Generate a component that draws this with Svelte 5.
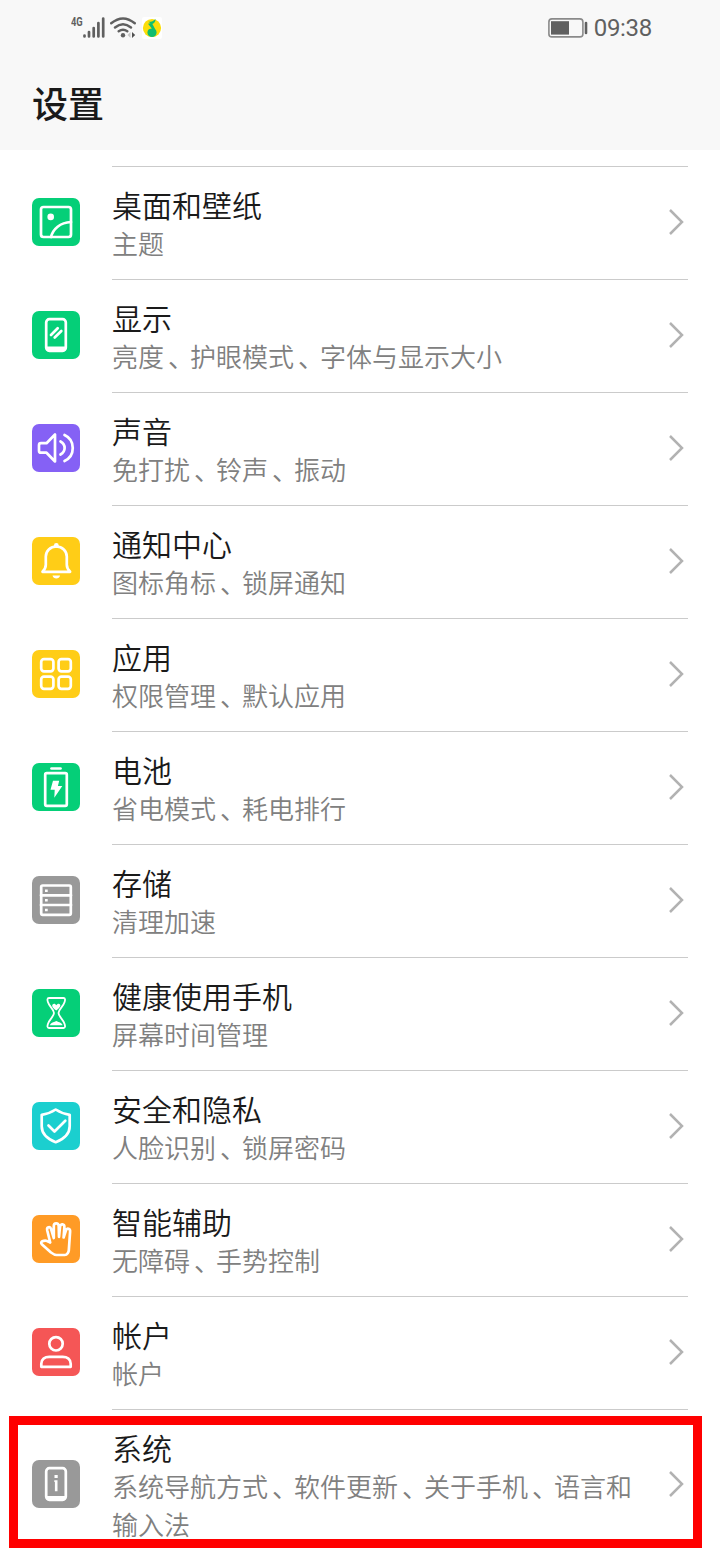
<script lang="ts">
  type Item = {
    icon: string
    color: string
    title: string
    summary: string
  }

  const items: Item[] = [
    { icon: 'wallpaper', color: 'green', title: '桌面和壁纸', summary: '主题' },
    { icon: 'display', color: 'green', title: '显示', summary: '亮度、护眼模式、字体与显示大小' },
    { icon: 'sound', color: 'purple', title: '声音', summary: '免打扰、铃声、振动' },
    { icon: 'bell', color: 'yellow', title: '通知中心', summary: '图标角标、锁屏通知' },
    { icon: 'apps', color: 'yellow', title: '应用', summary: '权限管理、默认应用' },
    { icon: 'battery', color: 'green', title: '电池', summary: '省电模式、耗电排行' },
    { icon: 'storage', color: 'gray', title: '存储', summary: '清理加速' },
    { icon: 'hourglass', color: 'green', title: '健康使用手机', summary: '屏幕时间管理' },
    { icon: 'shield', color: 'cyan', title: '安全和隐私', summary: '人脸识别、锁屏密码' },
    { icon: 'hand', color: 'orange', title: '智能辅助', summary: '无障碍、手势控制' },
    { icon: 'account', color: 'red', title: '帐户', summary: '帐户' },
    { icon: 'system', color: 'gray', title: '系统', summary: '系统导航方式、软件更新、关于手机、语言和输入法' },
  ]
</script>

<div class="screen">
  <header>
    <div class="status-bar">
      <div class="status-group">
        <span class="network">4G</span>
        <svg class="signal" width="22" height="21" viewBox="0 0 22 21">
          <path d="M1.5 18.5v1M6 15v4.5M10.7 11v8.5M15.4 6v13.5M20.2 1.5v18" stroke="#606060" stroke-width="2.7" stroke-linecap="round" />
        </svg>
        <svg class="wifi" width="26" height="22" viewBox="0 0 26 22" fill="none">
          <path d="M1.2 6.3Q13-3.4 24.8 6.3M5 10.5q8-6.7 16 0M8.7 14.3q4.3-3.3 8.6 0" stroke="#606060" stroke-width="2.4" stroke-linecap="round" />
          <circle cx="13" cy="18.3" r="2.2" fill="#606060" />
          <path d="M20.5 15v6l-3-3z" fill="#c8c8c8" />
          <path d="M22 15v6l3.2-3z" fill="#505050" />
        </svg>
        <svg class="music" width="20" height="22" viewBox="0 0 20 22">
          <rect width="20" height="22" rx="2" fill="#fff" />
          <circle cx="10" cy="11" r="9.1" fill="#fbdd09" />
          <path d="M6.5 4.8c2.500.2 5-.8 7-2.900.1 2.600-1.200 4.300-3.100 5l2.700 5.200a4.600 4.600 0 1 1-6.300.1l3-.7-3.800-4.700 2.500-.6z" fill="#10bd70" />
        </svg>
      </div>
      <div class="status-group">
        <svg width="40" height="20" viewBox="0 0 40 20" fill="none">
          <rect x=".9" y=".9" width="34" height="18" rx="3" stroke="#8a8a8a" stroke-width="1.6" />
          <rect x="3" y="3.2" width="18" height="13.4" fill="#606060" />
          <path d="M38 5v10" stroke="#606060" stroke-width="2.6" stroke-linecap="round" />
        </svg>
        <span class="time">09:38</span>
      </div>
    </div>
    <h1>设置</h1>
  </header>

  <main>
    {#each items as item, i}
      <div class="row" class:highlighted={i === items.length - 1}>
        <div class="tile {item.color}">
          <svg width="48" height="48" viewBox="0 0 48 48">
            {#if item.icon === 'wallpaper'}
              <rect x="9" y="9" width="30" height="30" rx="2.5" />
              <circle class="solid" cx="18.7" cy="18.9" r="3.3" />
              <path d="M19 39c2-8 9-14.500 20-15" />
            {:else if item.icon === 'display'}
              <rect x="14.2" y="8.2" width="19.6" height="31.6" rx="3.2" />
              <path class="solid" d="M14 35.500h20v3l-2 2H16l-2-2z" />
              <path d="m19 24 6.700-6.700M22.700 26.500l6.600-6.500" />
            {:else if item.icon === 'sound'}
              <path d="M23 10.500v27L14.500 28.700H9c-1.200 0-2-.8-2-2v-5.500c0-1.200.8-2 2-2h5.500zM28.500 17.500c5.500 3 5.500 10 0 13M32.500 11c11 5 11 21 0 26" />
            {:else if item.icon === 'bell'}
              <path d="M10.500 34.800c2.300-2.300 3.300-3.800 3.300-7V19.500c0-5.500 4.500-10 10.500-10s10.500 4.500 10.500 10v8.300c0 3.200 1 4.700 3.300 7z" />
              <circle class="solid" cx="24.3" cy="8.5" r="2.4" />
              <path class="solid" d="M20.500 38.500h7.600c-.7 4-6.900 4-7.600 0z" />
            {:else if item.icon === 'apps'}
              <rect x="9.2" y="9.2" width="12.2" height="12.2" rx="2.8" />
              <rect x="26.6" y="9.2" width="12.2" height="12.2" rx="2.8" />
              <rect x="9.2" y="26.6" width="12.2" height="12.2" rx="2.8" />
              <rect x="26.6" y="26.6" width="12.2" height="12.2" rx="2.8" />
            {:else if item.icon === 'battery'}
              <rect x="13.2" y="10.2" width="21.6" height="32.6" rx="1.5" />
              <path d="M19.500 5.500h9" />
              <path class="solid" d="m21 17.800h6.200l-1.300 5.200h4.400l-8 11.700.4-8h-4.200z" />
            {:else if item.icon === 'storage'}
              <rect x="9.2" y="9.5" width="29.6" height="29.3" rx="1.5" />
              <path d="M9 19.300h30M9 29h30" />
              <path class="solid" d="M13 13.400h2.700v2.500H13zM13 23.100h2.700v2.500H13zM13 32.700h2.700v2.500H13z" />
            {:else if item.icon === 'hourglass'}
              <path class="thin" d="M17 9h14.500c2 0 1.700 2 1.100 4-1.500 5-6.100 7.500-6.100 11s4.600 6 6.100 11c.6 2 .9 4-1.100 4H17c-2 0-1.700-2-1.100-4C17.400 30 22 27.500 22 24s-4.600-6-6.100-11c-.6-2-.9-4 1.100-4z" />
              <path class="solid" d="M24.300 21.500c-2.500-1.700-5.100-4-3.700-6 1.200-1.500 3-.5 3.700.8.700-1.300 2.700-2.300 3.700-.8 1.200 2-1.200 4.300-3.700 6zM18 36.300c.3-2.200 3.300-3 6.300-4.300 3 1.300 6 2.100 6.300 4.300z" />
            {:else if item.icon === 'shield'}
              <path d="M23.700 7.500c4.500 3 8.800 4.500 14 5.300v11.500c0 7-4.500 12.200-14 15.900-9.500-3.700-14-8.900-14-15.900V12.800c5.200-.8 9.500-2.300 14-5.300z" />
              <path d="m16.500 23.500 6 6 10.800-10.700" />
            {:else if item.icon === 'hand'}
              <path d="m18.200 27.500-3-12.300c-.7-3.200 2.900-4.200 3.900-1.200l2.700 9V11c0-3.500 4.700-3.500 4.900 0l.3 10.800 1-10c.3-3.400 4.600-3 4.400.4l-.8 10.300 2.300-7c1-3 4.500-2 4.200 1.200l-1.300 18.600c-.1 1.500-1.500 4.700-4 4.700H24.500c-2 0-3.700-1.200-5.500-2.500L9.800 29.200c-1-1.200-.7-2.300.5-2.900 2.300-1.200 4.700-.8 6.500.5z" />
            {:else if item.icon === 'account'}
              <circle cx="24" cy="15.8" r="6.7" />
              <path d="M9.300 38.800v-3c0-4.500 3.500-7 8-7h13.400c4.500 0 8 2.500 8 7v3z" />
            {:else if item.icon === 'system'}
              <rect x="14.2" y="8.2" width="19.6" height="31.6" rx="3.2" />
              <path class="solid" d="M14 36h20v2.500l-2 2H16l-2-2z" />
              <path class="solid" d="M22.500 15h3.200v3h-3.200zM22.300 20.200h3.200v11h-2.600v-9.200h-.6z" />
            {/if}
          </svg>
        </div>
        <div class="content">
          <div class="text">
            <div class="title">{item.title}</div>
            <div class="summary">
              {#each item.summary.split('、') as part, n}{#if n > 0}<span class="comma">、</span>{/if}{part}{/each}
            </div>
          </div>
          <svg class="chevron" width="18" height="28" viewBox="0 0 18 28">
            <path d="m2 2 12 12L2 26" fill="none" stroke="#b2b2b2" stroke-width="2.5" />
          </svg>
        </div>
      </div>
    {/each}
  </main>
</div>

<style>
  :global(body) {
    margin: 0;
    background: #ffffff;
  }

  .screen {
    width: 720px;
    height: 1560px;
    overflow: hidden;
    background: #ffffff;
    color: #1a1a1a;
    font-family: 'Noto Sans CJK SC', sans-serif;
  }

  header {
    height: 150px;
    background: #f8f8f8;
  }

  .status-bar {
    display: flex;
    justify-content: space-between;
    height: 56px;
    padding: 0 68px 0 71px;
    box-sizing: border-box;
  }

  .status-group {
    display: flex;
    align-items: center;
  }

  .network {
    width: 12px;
    margin-bottom: 12px;
    color: #606060;
    font: 700 13px/14px Roboto, sans-serif;
    transform: scaleX(0.72);
    transform-origin: left;
  }

  .signal {
    margin-bottom: 2px;
  }

  .wifi {
    margin-left: 5px;
  }

  .music {
    margin-left: 6px;
  }

  .time {
    margin-left: 6px;
    color: #606060;
    font: 24px/56px Roboto, sans-serif;
    letter-spacing: -0.3px;
  }

  h1 {
    margin: 0;
    padding: 22px 32px 0;
    font-size: 36px;
    font-weight: 500;
    line-height: 48px;
  }

  main {
    padding: 16px 32px 0;
  }

  .row {
    position: relative;
    display: flex;
    align-items: center;
    gap: 32px;
    height: 113px;
  }

  .row.highlighted {
    height: 151px;
  }

  .row.highlighted::after {
    content: '';
    position: absolute;
    top: 7px;
    left: -23px;
    width: 693px;
    height: 132px;
    box-sizing: border-box;
    border: 9px solid #ff0000;
  }

  .tile {
    width: 48px;
    height: 48px;
    margin-bottom: 2px;
    border-radius: 7px;
    flex: none;
  }

  .tile svg {
    display: block;
    fill: none;
    stroke: #ffffff;
    stroke-width: 2.7;
    stroke-linecap: round;
    stroke-linejoin: round;
  }

  .tile .thin {
    stroke-width: 1.8;
  }

  .tile .solid {
    fill: #ffffff;
    stroke: none;
  }

  .green {
    background: #05cf78;
  }

  .purple {
    background: #8561f5;
  }

  .yellow {
    background: #ffcd17;
  }

  .gray {
    background: #999999;
  }

  .cyan {
    background: #1bcfcf;
  }

  .orange {
    background: #ff9b26;
  }

  .red {
    background: #f55656;
  }

  .content {
    flex: 1;
    align-self: stretch;
    display: flex;
    align-items: center;
    justify-content: space-between;
    border-top: 1px solid #cbcbcb;
  }

  .text {
    align-self: flex-start;
    width: 540px;
    padding-top: 18px;
  }

  .title {
    font-size: 30px;
    font-weight: 350;
    line-height: 38px;
  }

  .summary {
    padding-top: 1px;
    color: #808080;
    font-size: 26px;
    font-weight: 350;
    line-height: 38px;
  }

  /* half-width comma, padded back to a full cell */
  .comma {
    padding: 0 9px 0 4px;
    font-feature-settings: 'halt';
  }

  .chevron {
    margin: 0 2px 2px 0;
  }
</style>
